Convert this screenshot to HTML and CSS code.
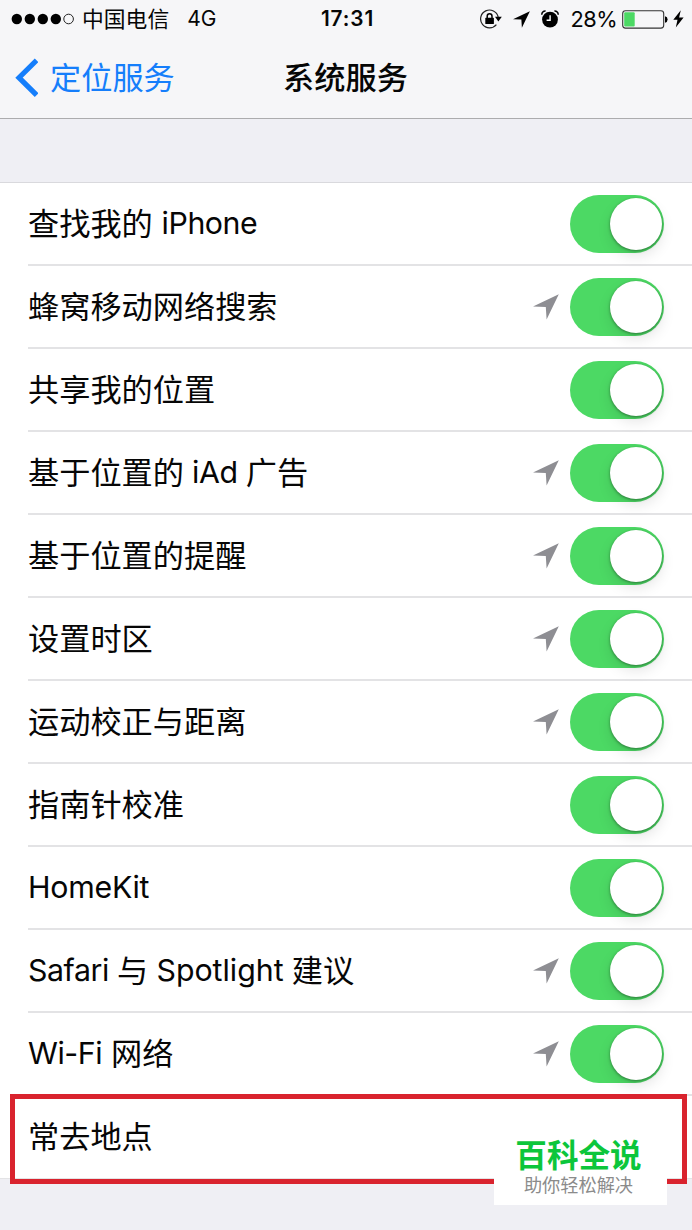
FILE: index.html
```html
<!DOCTYPE html>
<html lang="zh-CN">
<head>
<meta charset="utf-8">
<title>系统服务</title>
<link rel="stylesheet" href="styles.css">
</head>
<body>
<svg class="defs" width="0" height="0" aria-hidden="true">
  <symbol id="arrow" viewBox="0 0 26 26"><path d="M25.8 .3 13.6 25.6 12.8 13 0 12.6Z"/></symbol>
</svg>
<header class="header">
  <div class="status">
    <div class="carrier">
      <svg class="signal" width="63" height="12" viewBox="0 0 63 12"><circle cx="5.8" cy="6" r="5.2"/><circle cx="18.8" cy="6" r="5.2"/><circle cx="31.8" cy="6" r="5.2"/><circle cx="44.8" cy="6" r="5.2"/><circle class="hollow" cx="57.6" cy="6" r="4.8"/></svg>
      <span class="operator">中国电信</span><span class="network">4G</span>
    </div>
    <div class="clock">17:31</div>
    <div class="indicators">
      <svg class="lock" width="22" height="20" viewBox="0 0 22 20"><path class="ring" d="M16.4 15.6A8.9 8.9 0 1 1 18.2 8"/><path d="M15 7.8h6.8l-3.4 4.6z"/><rect x="5.3" y="8.8" width="8.6" height="6.2" rx=".6"/><path class="shackle" d="M7.2 9.2V7.2a2.4 2.4 0 0 1 4.8 0v2"/></svg>
      <svg class="nav-arrow" width="17" height="17"><use href="#arrow"/></svg>
      <svg class="alarm" width="18" height="18" viewBox="0 0 18 18"><circle cx="9" cy="9.6" r="7.9"/><path class="bell" d="M.8 4.8A3.5 3.5 0 0 1 4.6 1M17.2 4.8A3.5 3.5 0 0 0 13.4 1"/><path class="hand" d="M9.1 5.2v5H5.6"/></svg>
      <span class="percent">28%</span>
      <svg class="battery" width="46" height="19" viewBox="0 0 46 19"><rect class="shell" x=".7" y=".7" width="41" height="17.4" rx="2.8"/><rect class="charge" x="2.2" y="2.2" width="10.5" height="14.4" rx="1"/><path d="M43 6.2q2.6.6 2.6 3.3T43 12.8z"/></svg>
      <svg class="bolt" width="11" height="18" viewBox="0 0 11 18"><path d="M7.8.3.3 9.8h4.2L2.8 17.5 10.6 7.6H6.1z"/></svg>
    </div>
  </div>
  <nav class="navbar">
    <a class="back"><svg width="25" height="40" viewBox="0 0 25 40"><path d="M23.6 2.3 6 19.7l17.6 17.4"/></svg><span>定位服务</span></a>
    <h1 class="title">系统服务</h1>
  </nav>
</header>
<main class="list">
  <div class="row"><span class="label">查找我的 <span class="latin">iPhone</span></span><i class="switch"></i></div>
  <div class="row"><span class="label">蜂窝移动网络搜索</span><svg class="located"><use href="#arrow"/></svg><i class="switch"></i></div>
  <div class="row"><span class="label">共享我的位置</span><i class="switch"></i></div>
  <div class="row"><span class="label tight">基于位置的 <span class="latin">iAd</span> 广告</span><svg class="located"><use href="#arrow"/></svg><i class="switch"></i></div>
  <div class="row"><span class="label">基于位置的提醒</span><svg class="located"><use href="#arrow"/></svg><i class="switch"></i></div>
  <div class="row"><span class="label">设置时区</span><svg class="located"><use href="#arrow"/></svg><i class="switch"></i></div>
  <div class="row"><span class="label">运动校正与距离</span><svg class="located"><use href="#arrow"/></svg><i class="switch"></i></div>
  <div class="row"><span class="label">指南针校准</span><i class="switch"></i></div>
  <div class="row"><span class="label"><span class="latin homekit">HomeKit</span></span><i class="switch"></i></div>
  <div class="row"><span class="label tight"><span class="latin">Safari</span> 与 <span class="latin spotlight">Spotlight</span> 建议</span><svg class="located"><use href="#arrow"/></svg><i class="switch"></i></div>
  <div class="row"><span class="label"><span class="latin">Wi-Fi</span> 网络</span><svg class="located"><use href="#arrow"/></svg><i class="switch"></i></div>
  <div class="row"><span class="label">常去地点</span></div>
</main>
<div class="highlight"></div>
<aside class="watermark"><strong>百科全说</strong><span>助你轻松解决</span></aside>
</body>
</html>
```
FILE: styles.css
```css
* { box-sizing: border-box; }
body {
  margin: 0;
  width: 692px;
  height: 1230px;
  position: relative;
  overflow: hidden;
  background: #efeff4;
  color: #060606;
  font-family: Inter, "Noto Sans CJK SC", sans-serif;
}
svg { display: block; flex: none; }
.defs { position: absolute; }
.header { height: 119px; background: #f6f6f8; border-bottom: 1px solid #acacae; }
.status { height: 38px; display: grid; grid-template-columns: 1fr auto 1fr; align-items: center; padding: 0 8px 0 11px; line-height: 38px; }
.carrier { display: flex; align-items: center; }
.signal .hollow { fill: none; stroke: #222; stroke-width: 1; }
.operator { margin-left: 8px; font-size: 21.8px; }
.network { margin-left: 18px; font-size: 21px; }
.clock { font-size: 20.8px; font-weight: 600; letter-spacing: .9px; }
.indicators { display: flex; align-items: center; justify-content: flex-end; }
.ring { fill: none; stroke: #222; stroke-width: 1.2; }
.shackle { fill: none; stroke: #000; stroke-width: 1.5; }
.nav-arrow { margin-left: 11px; }
.alarm { margin-left: 11px; }
.bell { fill: none; stroke: #000; stroke-width: 1.5; }
.hand { fill: none; stroke: #fff; stroke-width: 1.4; }
.percent { margin-left: 12px; font-size: 21.8px; letter-spacing: -.6px; }
.battery { margin-left: 5px; }
.shell { fill: none; stroke: #333; stroke-width: 1.1; }
.charge { fill: #4cd964; }
.bolt { margin-left: 5px; }
.navbar { height: 80px; display: grid; grid-template-columns: 1fr auto 1fr; align-items: center; padding: 0 0 0 13px; }
.back { display: flex; align-items: center; color: #157efb; font-size: 31.2px; line-height: 40px; }
.back path { fill: none; stroke: #157efb; stroke-width: 5.2; }
.back span { margin-left: 12px; }
.title { margin: 0 7px 0 -7px; font-size: 31.2px; line-height: 40px; font-weight: 500; }
.list { margin-top: 63px; border-top: 1px solid #d9d9dd; background: #fff; }
.row { height: 83px; margin-left: 28px; padding-right: 28px; display: flex; align-items: center; border-bottom: 2px solid #e3e3e5; }
.row:last-child { margin-left: 0; padding-left: 28px; border-bottom-width: 1px; }
.label { flex: 1; padding-top: 1px; font-size: 31.2px; line-height: 44px; font-weight: 400; white-space: nowrap; }
.row:last-child .label { padding-top: 0; }
.label.tight { word-spacing: -.6px; }
.latin { position: relative; top: -1px; font-size: 30.3px; letter-spacing: -.42px; }
.homekit { letter-spacing: -.25px; }
.spotlight { letter-spacing: 0; }
.located { width: 26px; height: 26px; margin-right: 11px; fill: #8e8e93; }
.switch { display: flex; justify-content: flex-end; align-items: center; width: 94px; height: 58px; padding-right: 2px; border-radius: 29px; background: #4cd964; }
.switch::before { content: ""; width: 52px; height: 52px; border-radius: 50%; background: #fff; box-shadow: 0 1px 3px rgba(0,0,0,.4), 0 6px 14px rgba(0,0,0,.1); }
.highlight { position: absolute; left: 10px; top: 1094px; width: 677px; height: 90px; border: 5px solid #d9232e; }
.watermark { position: absolute; left: 494px; top: 1134px; width: 173px; height: 71px; padding-right: 4px; background: #fff; display: flex; flex-direction: column; align-items: center; text-align: center; }
.watermark strong { margin-top: 3px; font-size: 31.6px; line-height: 38px; font-weight: 700; color: #0cc63b; }
.watermark span { font-size: 18.2px; line-height: 21px; color: #8b8b8b; }
```
